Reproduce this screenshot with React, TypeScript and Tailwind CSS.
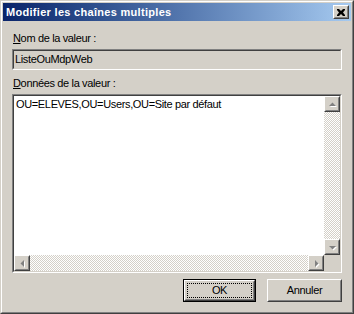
import React from "react";

const font = { fontFamily: '"Liberation Sans", Arial, sans-serif' };

function Raised({ className = "", children }: { className?: string; children?: React.ReactNode }) {
  return (
    <div className={`border border-t-white border-l-white border-r-[#404040] border-b-[#404040] ${className}`}>
      <div className="w-full h-full border border-t-[#d4d0c8] border-l-[#d4d0c8] border-r-[#808080] border-b-[#808080] bg-[#d4d0c8] flex items-center justify-center">
        {children}
      </div>
    </div>
  );
}

function Sunken({ className = "", children }: { className?: string; children?: React.ReactNode }) {
  return (
    <div className={`border border-t-[#808080] border-l-[#808080] border-r-white border-b-white ${className}`}>
      <div className="w-full h-full border border-t-[#404040] border-l-[#404040] border-r-[#d4d0c8] border-b-[#d4d0c8]">
        {children}
      </div>
    </div>
  );
}

function Arrow({ dir }: { dir: "up" | "down" | "left" | "right" }) {
  const pts: Record<string, string> = {
    up: "1,5 8,5 4.5,1.5",
    down: "1,2 8,2 4.5,5.5",
    left: "5,1 5,8 1.5,4.5",
    right: "2,1 2,8 5.5,4.5",
  };
  const vertical = dir === "up" || dir === "down";
  return (
    <svg width={vertical ? 9 : 7} height={vertical ? 7 : 9} viewBox={vertical ? "0 0 9 7" : "0 0 7 9"}>
      <polygon points={pts[dir]} fill="#ffffff" transform="translate(1,1)" />
      <polygon points={pts[dir]} fill="#808080" />
    </svg>
  );
}

const track = "bg-[repeating-conic-gradient(#d4d0c8_0%_25%,#ffffff_0%_50%)] bg-[length:2px_2px]";

export default function App() {
  return (
    <div className="w-[354px] h-[314px] bg-[#d4d0c8]" style={font}>
      <div className="w-full h-full border border-t-[#d4d0c8] border-l-[#d4d0c8] border-r-[#404040] border-b-[#404040]">
        <div className="w-full h-full border border-t-white border-l-white border-r-[#808080] border-b-[#808080] p-px flex flex-col">
          {/* Title bar */}
          <div className="h-[18px] flex items-center justify-between bg-gradient-to-r from-[#0a246a] to-[#a6caf0] pl-[3px] pr-[2px]">
            <span className="text-white font-bold text-[11px] leading-[13px] tracking-[0.3px]">Modifier les chaînes multiples</span>
            <Raised className="w-[16px] h-[14px]">
              <svg width="8" height="7" viewBox="0 0 8 7">
                <path d="M0 0h2l2 2 2-2h2v1L6 3.5 8 6v1H6L4 5 2 7H0V6l2-2.5L0 1z" fill="#000" />
              </svg>
            </Raised>
          </div>

          {/* Content */}
          <div className="flex-1 flex flex-col px-[9px] pb-[9px] text-[11px] leading-[13px] tracking-[-0.35px] text-black">
            <div className="mt-[11px] pl-[1px]">
              <span className="underline underline-offset-[1px]">N</span>om de la valeur :
            </div>
            <Sunken className="mt-[4px] h-[21px]">
              <div className="h-full flex items-center pl-[1px] bg-[#d4d0c8]">ListeOuMdpWeb</div>
            </Sunken>
            <div className="mt-[7px] pl-[1px]">
              <span className="underline underline-offset-[1px]">D</span>onnées de la valeur :
            </div>
            <Sunken className="mt-[4px] h-[179px]">
              <div className="w-full h-full grid grid-cols-[1fr_16px] grid-rows-[1fr_16px]">
                <div className="bg-white pl-[2px] pt-[2px]">OU=ELEVES,OU=Users,OU=Site par défaut</div>
                <div className={`flex flex-col ${track}`}>
                  <Raised className="w-[16px] h-[16px]"><Arrow dir="up" /></Raised>
                  <div className="flex-1" />
                  <Raised className="w-[16px] h-[16px]"><Arrow dir="down" /></Raised>
                </div>
                <div className={`flex ${track}`}>
                  <Raised className="w-[16px] h-[16px]"><Arrow dir="left" /></Raised>
                  <div className="flex-1" />
                  <Raised className="w-[16px] h-[16px]"><Arrow dir="right" /></Raised>
                </div>
                <div className="bg-[#d4d0c8]" />
              </div>
            </Sunken>
            <div className="mt-[6px] flex justify-end gap-[11px]">
              <div className="w-[73px] h-[23px] border border-black">
                <div className="w-full h-full border border-t-white border-l-white border-r-[#404040] border-b-[#404040]">
                  <div className="w-full h-full border border-t-[#d4d0c8] border-l-[#d4d0c8] border-r-[#808080] border-b-[#808080] p-[1px]">
                    <div className="w-full h-full border border-dotted border-black flex items-center justify-center">OK</div>
                  </div>
                </div>
              </div>
              <Raised className="w-[75px] h-[23px]">Annuler</Raised>
            </div>
          </div>
        </div>
      </div>
    </div>
  );
}
